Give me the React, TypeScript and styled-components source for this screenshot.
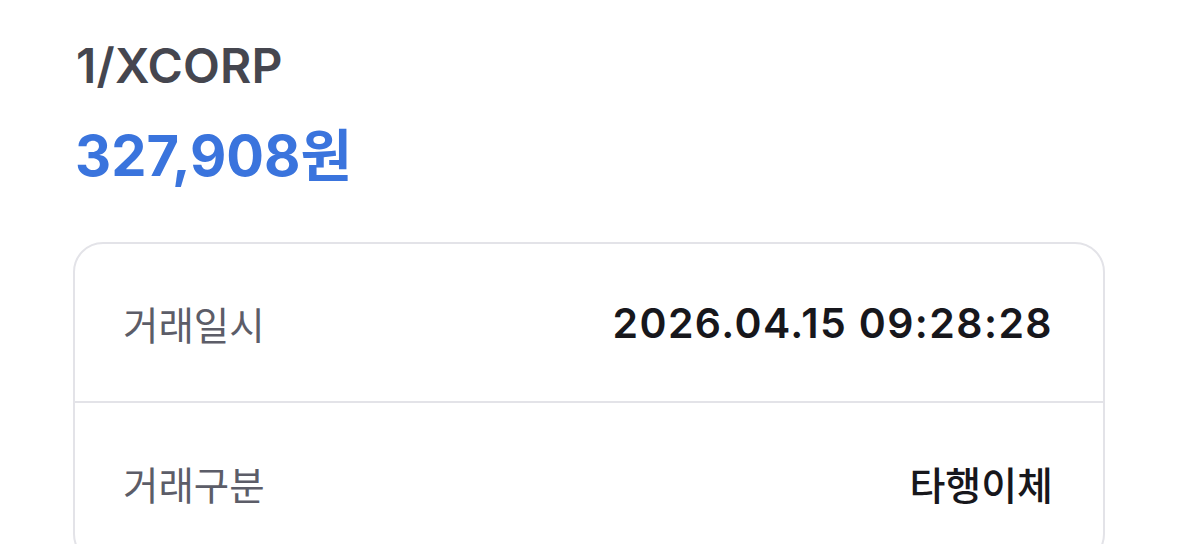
import React from 'react';
import styled, { createGlobalStyle } from 'styled-components';

const GlobalStyle = createGlobalStyle`
    html, body {
        margin: 0;
        padding: 0;
        background: #ffffff;
    }
    body {
        font-family: Inter, "Noto Sans CJK KR", "Noto Sans", sans-serif;
        -webkit-font-smoothing: antialiased;
    }
`;

const Page = styled.div`
    width: 1179px;
    height: 544px;
    overflow: hidden;
    box-sizing: border-box;
    padding: 38px 73px 0 73px;
    display: flex;
    flex-direction: column;
`;

const Merchant = styled.div`
    padding-left: 3px;
    font-size: 48px;
    line-height: 56px;
    font-weight: 600;
    color: #45464f;
    letter-spacing: 0.2px;
`;

const Amount = styled.div`
    margin-top: 30px;
    padding-left: 2px;
    font-size: 56px;
    line-height: 64px;
    font-weight: 700;
    color: #3a74dd;
`;

const Card = styled.div`
    margin-top: 54px;
    width: 1032px;
    box-sizing: border-box;
    border: 2px solid #e3e3e8;
    border-radius: 30px;
`;

const Row = styled.div<{ $last?: boolean }>`
    height: 159px;
    box-sizing: border-box;
    padding: 0 50px 0 48px;
    display: flex;
    align-items: center;
    justify-content: space-between;
    border-bottom: ${(p) => (p.$last ? 'none' : '2px solid #e3e3e8')};
`;

const Label = styled.span`
    font-family: "Noto Sans CJK KR", Inter, sans-serif;
    font-size: 38.5px;
    font-weight: 400;
    color: #5c5d68;
`;

const Value = styled.span<{ $hangul?: boolean }>`
    font-family: ${(p) => (p.$hangul ? '"Noto Sans CJK KR", Inter, sans-serif' : 'Inter, "Noto Sans CJK KR", sans-serif')};
    font-size: ${(p) => (p.$hangul ? '39px' : '41px')};
    font-weight: ${(p) => (p.$hangul ? 500 : 600)};
    color: #17171c;
    letter-spacing: ${(p) => (p.$hangul ? '0' : '1.4px')};
`;

const rows = [
    { label: '거래일시', value: '2026.04.15 09:28:28', hangul: false },
    { label: '거래구분', value: '타행이체', hangul: true },
];

export default function App() {
    return (
        <>
            <GlobalStyle />
            <Page>
                <Merchant>1/XCORP</Merchant>
                <Amount>327,908원</Amount>
                <Card>
                    {rows.map((r, i) => (
                        <Row key={r.label} $last={i === rows.length - 1}>
                            <Label>{r.label}</Label>
                            <Value $hangul={r.hangul}>{r.value}</Value>
                        </Row>
                    ))}
                </Card>
            </Page>
        </>
    );
}
